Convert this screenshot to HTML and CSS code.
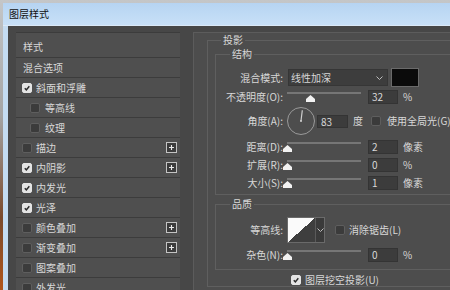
FILE: index.html
```html
<html>
<head>
    <meta charset="UTF-8">
    <title>图层样式</title>
    <link rel="stylesheet" href="styles.css">
</head>
<body>
    <div class="window">
        <div class="titlebar">图层样式</div>
        <div class="dialog">
            <ul class="style-list">
                <li class="item head">样式</li>
                <li class="item">混合选项</li>
                <li class="item"><span class="check on"><svg viewBox="0 0 10 10"><path d="M2.2 5.2 4.2 7.3 7.9 2.9" fill="none" stroke="#2b2b2b" stroke-width="1.8"/></svg></span>斜面和浮雕</li>
                <li class="item sub"><span class="check"></span>等高线</li>
                <li class="item sub"><span class="check"></span>纹理</li>
                <li class="item"><span class="check"></span>描边<span class="add"><svg viewBox="0 0 11 11"><path d="M5.5 2.5v6M2.5 5.5h6" stroke="#ececec" stroke-width="1.4"/></svg></span></li>
                <li class="item"><span class="check on"><svg viewBox="0 0 10 10"><path d="M2.2 5.2 4.2 7.3 7.9 2.9" fill="none" stroke="#2b2b2b" stroke-width="1.8"/></svg></span>内阴影<span class="add"><svg viewBox="0 0 11 11"><path d="M5.5 2.5v6M2.5 5.5h6" stroke="#ececec" stroke-width="1.4"/></svg></span></li>
                <li class="item"><span class="check on"><svg viewBox="0 0 10 10"><path d="M2.2 5.2 4.2 7.3 7.9 2.9" fill="none" stroke="#2b2b2b" stroke-width="1.8"/></svg></span>内发光</li>
                <li class="item"><span class="check on"><svg viewBox="0 0 10 10"><path d="M2.2 5.2 4.2 7.3 7.9 2.9" fill="none" stroke="#2b2b2b" stroke-width="1.8"/></svg></span>光泽</li>
                <li class="item"><span class="check"></span>颜色叠加<span class="add"><svg viewBox="0 0 11 11"><path d="M5.5 2.5v6M2.5 5.5h6" stroke="#ececec" stroke-width="1.4"/></svg></span></li>
                <li class="item"><span class="check"></span>渐变叠加<span class="add"><svg viewBox="0 0 11 11"><path d="M5.5 2.5v6M2.5 5.5h6" stroke="#ececec" stroke-width="1.4"/></svg></span></li>
                <li class="item"><span class="check"></span>图案叠加</li>
                <li class="item"><span class="check"></span>外发光</li>
            </ul>
            <div class="panel">
                <fieldset class="group outer">
                    <legend>投影</legend>
                    <fieldset class="group structure">
                        <legend>结构</legend>
                        <div class="row r-mode">
                            <span class="label">混合模式:</span>
                            <div class="select">线性加深<svg class="chev" viewBox="0 0 7 4"><path d="M0.5 0.5 3.5 3.5 6.5 0.5" fill="none" stroke="#bdbdbd"/></svg></div>
                            <span class="swatch"></span>
                        </div>
                        <div class="row r-opacity">
                            <span class="label">不透明度(O):</span>
                            <div class="slider"><svg class="thumb" style="left: calc(32% - 4.5px)" viewBox="0 0 9 7"><path d="M4.5 0 9 4V7H0V4Z" fill="#f2f2f2"/></svg></div>
                            <span class="field">32</span>
                            <span class="unit">%</span>
                        </div>
                        <div class="row r-angle">
                            <span class="label">角度(A):</span>
                            <svg class="dial" viewBox="0 0 28 28"><circle cx="14" cy="14" r="13.5" fill="none" stroke="#9a9a9a"/><path d="M14 14 15.3 3.2" stroke="#d0d0d0" stroke-width="1.2"/><circle cx="14" cy="14" r="1" fill="#d0d0d0"/></svg>
                            <span class="field angle">83</span>
                            <span class="unit">度</span>
                            <span class="check global"></span>
                            <span class="opt">使用全局光(G)</span>
                        </div>
                        <div class="row r-slider first">
                            <span class="label">距离(D):</span>
                            <div class="slider"><svg class="thumb" style="left: calc(1% - 4.5px)" viewBox="0 0 9 7"><path d="M4.5 0 9 4V7H0V4Z" fill="#f2f2f2"/></svg></div>
                            <span class="field">2</span>
                            <span class="unit">像素</span>
                        </div>
                        <div class="row r-slider">
                            <span class="label">扩展(R):</span>
                            <div class="slider"><svg class="thumb" style="left: calc(0% - 4.5px)" viewBox="0 0 9 7"><path d="M4.5 0 9 4V7H0V4Z" fill="#f2f2f2"/></svg></div>
                            <span class="field">0</span>
                            <span class="unit">%</span>
                        </div>
                        <div class="row r-slider">
                            <span class="label">大小(S):</span>
                            <div class="slider"><svg class="thumb" style="left: calc(0.5% - 4.5px)" viewBox="0 0 9 7"><path d="M4.5 0 9 4V7H0V4Z" fill="#f2f2f2"/></svg></div>
                            <span class="field">1</span>
                            <span class="unit">像素</span>
                        </div>
                    </fieldset>
                    <fieldset class="group quality">
                        <legend>品质</legend>
                        <div class="row r-contour">
                            <span class="label">等高线:</span>
                            <div class="contour">
                                <span class="curve"></span>
                                <span class="drop"><svg class="chev" viewBox="0 0 7 4"><path d="M0.5 0.5 3.5 3.5 6.5 0.5" fill="none" stroke="#bdbdbd"/></svg></span>
                            </div>
                            <span class="check aa"></span>
                            <span class="opt">消除锯齿(L)</span>
                        </div>
                        <div class="row r-slider noise">
                            <span class="label">杂色(N):</span>
                            <div class="slider"><svg class="thumb" style="left: calc(0% - 4.5px)" viewBox="0 0 9 7"><path d="M4.5 0 9 4V7H0V4Z" fill="#f2f2f2"/></svg></div>
                            <span class="field">0</span>
                            <span class="unit">%</span>
                        </div>
                    </fieldset>
                    <div class="knockout">
                        <span class="check on"><svg viewBox="0 0 10 10"><path d="M2.2 5.2 4.2 7.3 7.9 2.9" fill="none" stroke="#2b2b2b" stroke-width="1.8"/></svg></span>
                        <span class="opt">图层挖空投影(U)</span>
                    </div>
                </fieldset>
            </div>
        </div>
    </div>
</body>
</html>
```

FILE: styles.css
```css
* {
    box-sizing: border-box;
}
html, body {
    margin: 0;
}
body {
    width: 450px;
    height: 290px;
    overflow: hidden;
    background: linear-gradient(#c4c6c8 0, #a4a4a4 40%, #7a4a2c 75%, #b0561c 100%);
    font-family: "Noto Sans CJK SC", "Liberation Sans", sans-serif;
    font-size: 10px;
    color: #d8d8d8;
}
.window {
    margin: 3px 0 0 3px;
    height: 287px;
    background: #c4dcf2;
}
.titlebar {
    height: 23px;
    line-height: 22px;
    padding-left: 6px;
    color: #111;
    background: linear-gradient(#b6d4f2, #c8e0f7);
    border-bottom: 1px solid #dbe9f8;
}
.dialog {
    display: flex;
    margin-left: 5px;
    height: 264px;
    padding: 6px 0 0 8px;
    background: #474747;
    overflow: hidden;
}

/* left list */
.style-list {
    width: 164px;
    margin: 0 13px 0 0;
    padding: 0;
    list-style: none;
    flex-shrink: 0;
}
.item {
    display: flex;
    align-items: center;
    height: 20px;
    padding: 0 3px 0 6px;
    background: #4f4f4f;
    border-top: 1px solid #3c3c3c;
    line-height: 12px;
}
.item.head {
    height: 25px;
    padding-top: 4px;
    padding-left: 7px;
}
.item.head + .item {
    padding-left: 7px;
}
.item.sub {
    padding-left: 14px;
}
.check {
    display: inline-flex;
    width: 10px;
    height: 10px;
    margin-right: 4px;
    border: 1px solid #5e5e5e;
    border-radius: 2px;
    background: #3b3b3b;
    flex-shrink: 0;
}
.check.on {
    border-color: #e4e4e4;
    background: #e4e4e4;
}
.check svg {
    width: 8px;
    height: 8px;
}
.item.sub .check {
    margin-right: 5px;
}
.add {
    display: inline-flex;
    width: 11px;
    height: 11px;
    margin-left: auto;
    border: 1px solid #c4c4c4;
    background: #3c3c3c;
}
.add svg {
    width: 9px;
    height: 9px;
}

/* right panel */
.panel {
    flex: 1;
    min-width: 0;
    padding: 1px 0 0 13px;
    border-top: 1px solid #5c5c5c;
    border-left: 1px solid #5c5c5c;
    background: #4d4d4d;
}
.group {
    margin: 0;
    padding: 0;
    min-width: 0;
    border: 1px solid #5f5f5f;
    border-right: none;
}
.group legend {
    padding: 0 2px;
    line-height: 12px;
    margin-left: 14px;
}
.outer {
    width: 260px;
    padding-left: 7px;
}
.outer > legend {
    margin-left: 6px;
}
.structure {
    margin-top: 2px;
    padding: 8px 0 2px 0;
}
.quality {
    margin-top: 3px;
    padding: 7px 0 7px 0;
}
.row {
    display: flex;
    align-items: center;
    line-height: 12px;
}
.label {
    width: 67px;
    text-align: right;
    flex-shrink: 0;
}
.r-mode {
    height: 19px;
}
.select {
    display: flex;
    align-items: center;
    width: 100px;
    height: 17px;
    margin-left: 5px;
    padding-left: 2px;
    background: #3d3d3d;
    border: 1px solid #363636;
}
.chev {
    width: 7px;
    height: 4px;
}
.select .chev {
    margin-left: auto;
    margin-right: 4px;
}
.swatch {
    width: 28px;
    height: 19px;
    margin-left: 3px;
    background: #0b0b0b;
    border: 1px solid #6a6a6a;
}
.r-opacity {
    height: 20px;
}
.slider {
    position: relative;
    width: 74px;
    height: 14px;
    margin-left: 4px;
}
.slider::before {
    content: "";
    display: block;
    margin-top: 2px;
    height: 2px;
    background: #767676;
}
.thumb {
    position: absolute;
    top: 5px;
    width: 9px;
    height: 7px;
}
.field {
    width: 30px;
    height: 14px;
    margin-left: 7px;
    padding-left: 3px;
    background: #3c3c3c;
    border: 1px solid #343434;
    line-height: 12px;
}
.unit {
    margin-left: 5px;
}
.r-angle {
    height: 28px;
}
.dial {
    width: 28px;
    height: 28px;
    margin-left: 4px;
}
.field.angle {
    width: 31px;
    height: 13px;
    margin-left: 2px;
}
.check.global {
    margin-left: 8px;
    margin-right: 6px;
}
.r-slider {
    height: 18px;
}
.r-slider.first {
    margin-top: 3px;
}
.r-contour {
    height: 26px;
}
.contour {
    display: flex;
    height: 26px;
    margin-left: 4px;
    border: 1px solid #6a6a6a;
}
.curve {
    width: 27px;
    background: linear-gradient(to bottom right, #fafafa 50%, #3e3e3e 50%);
}
.drop {
    display: flex;
    align-items: center;
    justify-content: center;
    width: 9px;
    background: #3a3a3a;
    border-left: 1px solid #5a5a5a;
}
.check.aa {
    margin-left: 10px;
}
.noise {
    height: 14px;
    margin-top: 5px;
}
.knockout {
    display: flex;
    align-items: center;
    height: 12px;
    margin-top: 4px;
    padding-left: 76px;
    line-height: 12px;
}
```
